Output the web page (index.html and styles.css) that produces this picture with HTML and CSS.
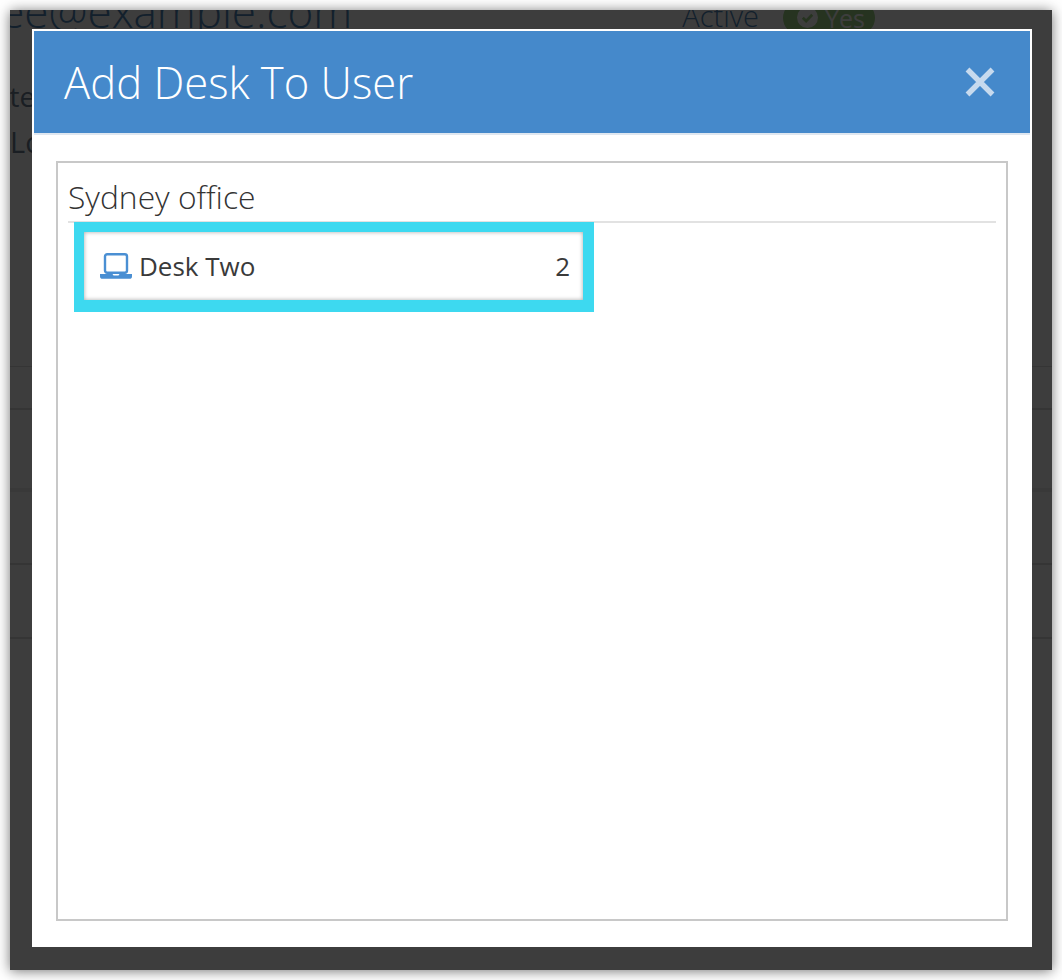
FILE: index.html
```html
<!DOCTYPE html>
<html lang="en">
<head>
<meta charset="utf-8">
<title>Add Desk To User</title>
<link rel="stylesheet" href="styles.css">
</head>
<body>
<div class="window">
  <div class="page">
    <div class="summary">
      <div class="email">employee@example.com</div>
      <div class="status">
        <span class="status-label">Active</span>
        <span class="pill">
          <svg class="pill-icon" viewBox="0 0 20 20"><circle cx="10" cy="10" r="10" fill="#fff"/><path d="M5.5 10.2l3.2 3.2 5.8-6" fill="none" stroke="#9ed485" stroke-width="2.6"/></svg>
          Yes
        </span>
      </div>
    </div>
    <div class="meta">
      <div class="meta-small">Site</div>
      <div class="meta-large">Location</div>
    </div>
    <div class="rows">
      <div class="row row-a"></div>
      <div class="row row-b"></div>
      <div class="row row-c"></div>
      <div class="row row-d"></div>
      <div class="row row-e"></div>
    </div>
  </div>
  <div class="overlay"></div>
  <div class="modal">
    <header class="modal-header">
      <h1 class="modal-title">Add Desk To User</h1>
      <svg class="close" viewBox="0 0 30 30" aria-label="Close"><path d="M2.5 2.5l25 25M27.5 2.5l-25 25" stroke="#c7daee" stroke-width="5.4" fill="none"/></svg>
    </header>
    <div class="modal-body">
      <div class="panel">
        <h2 class="group-title">Sydney office</h2>
        <div class="desk">
          <svg class="desk-icon" viewBox="0 0 32 26">
            <rect x="5" y="1.2" width="22" height="18.6" rx="2.2" fill="none" stroke="#4a8fd3" stroke-width="2.4"/>
            <path d="M0 21h12.5l1 1.5h5l1-1.5H32v2.2a2.6 2.6 0 0 1-2.6 2.6H2.6A2.6 2.6 0 0 1 0 23.2z" fill="#4a8fd3"/>
          </svg>
          <span class="desk-name">Desk Two</span>
          <span class="desk-count">2</span>
        </div>
      </div>
    </div>
  </div>
</div>
</body>
</html>
```
FILE: styles.css
```css
* { box-sizing: border-box; }
html, body { margin: 0; padding: 0; background: #fff; }
body { width: 1062px; height: 980px; padding: 10px; font-family: "Open Sans", sans-serif; overflow: hidden; }

.window {
  position: relative;
  width: 1042px;
  height: 960px;
  overflow: hidden;
  background: #fff;
  box-shadow: 0 1px 12px rgba(0, 0, 0, .55);
}

.page { height: 100%; color: #4f86b8; }
.summary { display: flex; justify-content: space-between; align-items: flex-start; height: 31px; margin-top: -29px; margin-left: -155px; padding-right: 177px; }
.email { font-size: 44px; line-height: 60px; font-weight: 300; }
.status { display: flex; align-items: center; gap: 24px; padding-top: 18px; }
.status-label { font-size: 29px; line-height: 34px; font-weight: 300; margin-bottom: 3px; }
.pill { display: flex; align-items: center; gap: 7px; height: 34px; padding: 0 10px 0 14px; border-radius: 17px; background: #9ed485; color: #fff; font-size: 25px; }
.pill-icon { width: 21px; height: 21px; }

.meta { margin-left: -23px; margin-top: 65px; color: #6d7f92; }
.meta-small { font-size: 28px; line-height: 38px; }
.meta-large { font-size: 29px; line-height: 44px; margin-top: 5px; margin-left: 23px; }

.rows { margin-top: 180px; }
.row { border-bottom: 1px solid #ddd; }
.row-a { height: 23px; }
.row-b { height: 43px; border-bottom-width: 2px; }
.row-c { height: 82px; border-bottom: 4px solid #ececec; }
.row-d { height: 73px; border-bottom-width: 2px; }
.row-e { height: 74px; border-bottom-width: 2px; }

.overlay { position: absolute; inset: 0; background: rgba(0, 0, 0, .76); }

.modal {
  position: absolute;
  left: 22px;
  top: 19px;
  width: 1000px;
  height: 918px;
  display: flex;
  flex-direction: column;
  padding: 2px;
  background: #fff;
}
.modal-header {
  display: flex;
  flex: none;
  justify-content: space-between;
  align-items: center;
  height: 104px;
  padding: 0 35px 0 30px;
  background: #4589cb;
  border-bottom: 2px solid #dfe7f0;
}
.modal-title { margin: 0; font-size: 43.6px; line-height: 56px; font-weight: 300; color: #fff; }
.close { width: 30px; height: 30px; }

.modal-body { flex: 1; display: flex; padding: 26px 22px 24px; }
.panel { flex: 1; border: 2px solid #c8c8c8; padding: 10px 10px 0; }
.group-title {
  margin: 0;
  height: 50px;
  font-size: 31.8px;
  line-height: 48px;
  font-weight: 300;
  color: #333;
  border-bottom: 2px solid #e2e2e2;
}
.desk {
  display: flex;
  align-items: center;
  width: 520px;
  height: 90px;
  margin: -1px 0 0 6px;
  padding: 0 13px 0 16px;
  border: 10px solid #3dd9f0;
  border-right-width: 11px;
  border-bottom-width: 12px;
  box-shadow: inset 0 0 4px rgba(0, 0, 0, .35);
  background: #fff;
  color: #3a3a3a;
  font-size: 26px;
}
.desk-icon { width: 32px; height: 26px; margin-right: 7px; }
.desk-name { flex: 1; }
```
